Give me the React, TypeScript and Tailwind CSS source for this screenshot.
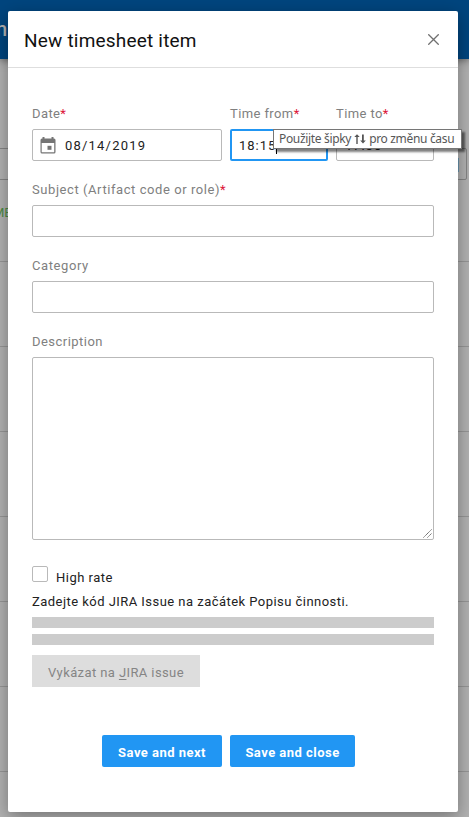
import React from "react";

const field = "h-8 rounded-[2px] border border-[#b9b9b9] bg-white";
const label = "block h-8 whitespace-nowrap text-[13px] leading-[33px] text-[#808080]";

function Required() {
  return <span className="text-[#dc1438]">*</span>;
}

function Backdrop() {
  return (
    <div className="absolute inset-0 bg-[#b2b2b2]">
      <div className="h-[59px] bg-[#00457e] shadow-[0_1px_8px_rgba(0,0,0,0.5)]">
        <span className="absolute left-[-4px] top-[14px] text-[20px] font-medium text-[#b2b2b2]">n</span>
      </div>
      <div className="absolute left-[-2px] top-[148px] h-8 w-[469px] rounded-[2px] border border-[#858585]" />
      <div className="absolute left-[440px] top-[158px] h-[14px] w-[19px] bg-[#6994ad]" />
      <span className="absolute left-[-7px] top-[203px] text-[13px] text-[#4c8a45]">ME</span>
      {[261, 346, 431, 516, 601, 686, 771].map((y) => (
        <div key={y} className="absolute left-0 h-px w-full bg-[#969696]" style={{ top: y }} />
      ))}
    </div>
  );
}

export default function App() {
  return (
    <div className="relative h-[817px] w-[469px] overflow-hidden font-[Roboto,'Noto_Sans',sans-serif]">
      <Backdrop />
      <div className="relative px-2 pt-[11px]">
        <section className="flex h-[801px] w-[450px] flex-col rounded-[2px] bg-white shadow-[0_5px_18px_rgba(0,0,0,0.35)]">
          <header className="flex h-[57px] shrink-0 items-center justify-between border-b border-[#dedede] pl-4 pr-[19px]">
            <h1 className="pt-[4px] text-[19px] tracking-[0.2px] text-[#111]">New timesheet item</h1>
            <svg width="11" height="11" viewBox="0 0 11 11" fill="none" stroke="#707070" strokeWidth="1.3">
              <path d="M.3.3 10.7 10.7M10.7.3.3 10.7" />
            </svg>
          </header>

          <div className="flex flex-col px-6 pt-[29px]">
            <div className="flex gap-2">
              <div className="w-[190px]">
                <label className={`${label} tracking-[0.4px]`}>Date<Required /></label>
                <div className={`${field} flex items-center pl-[7px]`}>
                  <svg className="shrink-0" width="16" height="17" viewBox="0 0 16 17" fill="#757575">
                    <path fillRule="evenodd" d="M2.5 0h2v1.500h7V0h2v1.500H14A1.500 1.500 0 0 1 15.500 3v12A1.500 1.500 0 0 1 14 16.500H2A1.500 1.500 0 0 1 .5 15V3A1.500 1.500 0 0 1 2 1.500h.5ZM1.700 6v9.200h12.500V6Z" />
                    <path d="M7.500 8.800h4v4h-4z" />
                  </svg>
                  <span className="ml-[9px] pt-[2px] text-[13px] tracking-[1.2px] text-[#222]">08/14/2019</span>
                </div>
              </div>
              <div className="w-[98px]">
                <label className={`${label} tracking-[0.4px]`}>Time from<Required /></label>
                <div className="flex h-8 items-center rounded-[2px] border-2 border-[#2196f3] pl-[7px] text-[13px] tracking-[1px] text-[#222]">
                  <span className="pt-[2px]">18:15</span>
                  <span className="mt-[3px] h-[15px] w-px shrink-0 bg-black" />
                </div>
              </div>
              <div className="w-[98px]">
                <label className={`${label} tracking-[0.4px]`}>Time to<Required /></label>
                <div className={`${field} flex items-center pl-2 pt-[2px] text-[13px] tracking-[1px] text-[#222]`}>17:30</div>
              </div>
            </div>

            <label className={`${label} mt-3 tracking-[0.57px]`}>Subject (Artifact code or role)<Required /></label>
            <div className={field} />
            <label className={`${label} mt-3 tracking-[0.6px]`}>Category</label>
            <div className={field} />
            <label className={`${label} mt-3 tracking-[0.47px]`}>Description</label>
            <div className="flex h-[183px] items-end justify-end rounded-[2px] border border-[#b9b9b9] p-px">
              <svg width="9" height="9" viewBox="0 0 9 9" stroke="#555" strokeWidth="1">
                <path d="M.5 8.500 8.500.5M4.500 8.500l4-4" strokeDasharray="1.2 .5" />
              </svg>
            </div>

            <div className="mt-[26px] flex h-[22px] gap-2 text-[13px] leading-[23px] tracking-[0.5px] text-[#222]">
              <span className="h-4 w-4 rounded-[2px] border border-[#b9b9b9]" />
              High rate
            </div>
            <p className="h-[29px] whitespace-nowrap text-[13px] leading-[27px] tracking-[0.46px] text-[#222]">
              Zadejte kód JIRA Issue na začátek Popisu činnosti.
            </p>
            <div className="h-[11px] bg-[#ccc]" />
            <div className="mt-[6px] h-[11px] bg-[#ccc]" />
            <button className="mt-[10px] h-8 w-[168px] whitespace-nowrap bg-[#ddd] pt-[3px] text-[13px] tracking-[0.4px] text-[#858585]">
              Vykázat na <span className="underline underline-offset-2">J</span>IRA issue
            </button>
            <div className="mt-12 flex gap-2 pl-[70px] text-[13px] font-bold tracking-[0.47px] text-white">
              <button className="h-8 w-[120px] rounded-[2px] bg-[#2196f3] pt-[3px]">Save and next</button>
              <button className="h-8 w-[125px] rounded-[2px] bg-[#2196f3] pt-[3px]">Save and close</button>
            </div>
          </div>
        </section>
      </div>

      <div className="absolute left-[273px] top-[129px] flex h-5 w-[189px] items-center whitespace-nowrap border border-[#767676] bg-white pl-[5px] font-['Noto_Sans','DejaVu_Sans',sans-serif] text-[12px] tracking-[-0.33px] text-[#575757] shadow-[3px_3px_2px_rgba(0,0,0,0.5)]">
        Použijte šipky
        <svg className="ml-[3px] mr-[3px]" width="12" height="10" viewBox="0 0 12 10" fill="#555">
          <path d="M2.300 10V3H.3L3 .3 5.700 3h-2v7zM8 .5h1.800V6.500h2L9 9.500 6.200 6.500H8z" />
        </svg>
        pro změnu času
      </div>
    </div>
  );
}
